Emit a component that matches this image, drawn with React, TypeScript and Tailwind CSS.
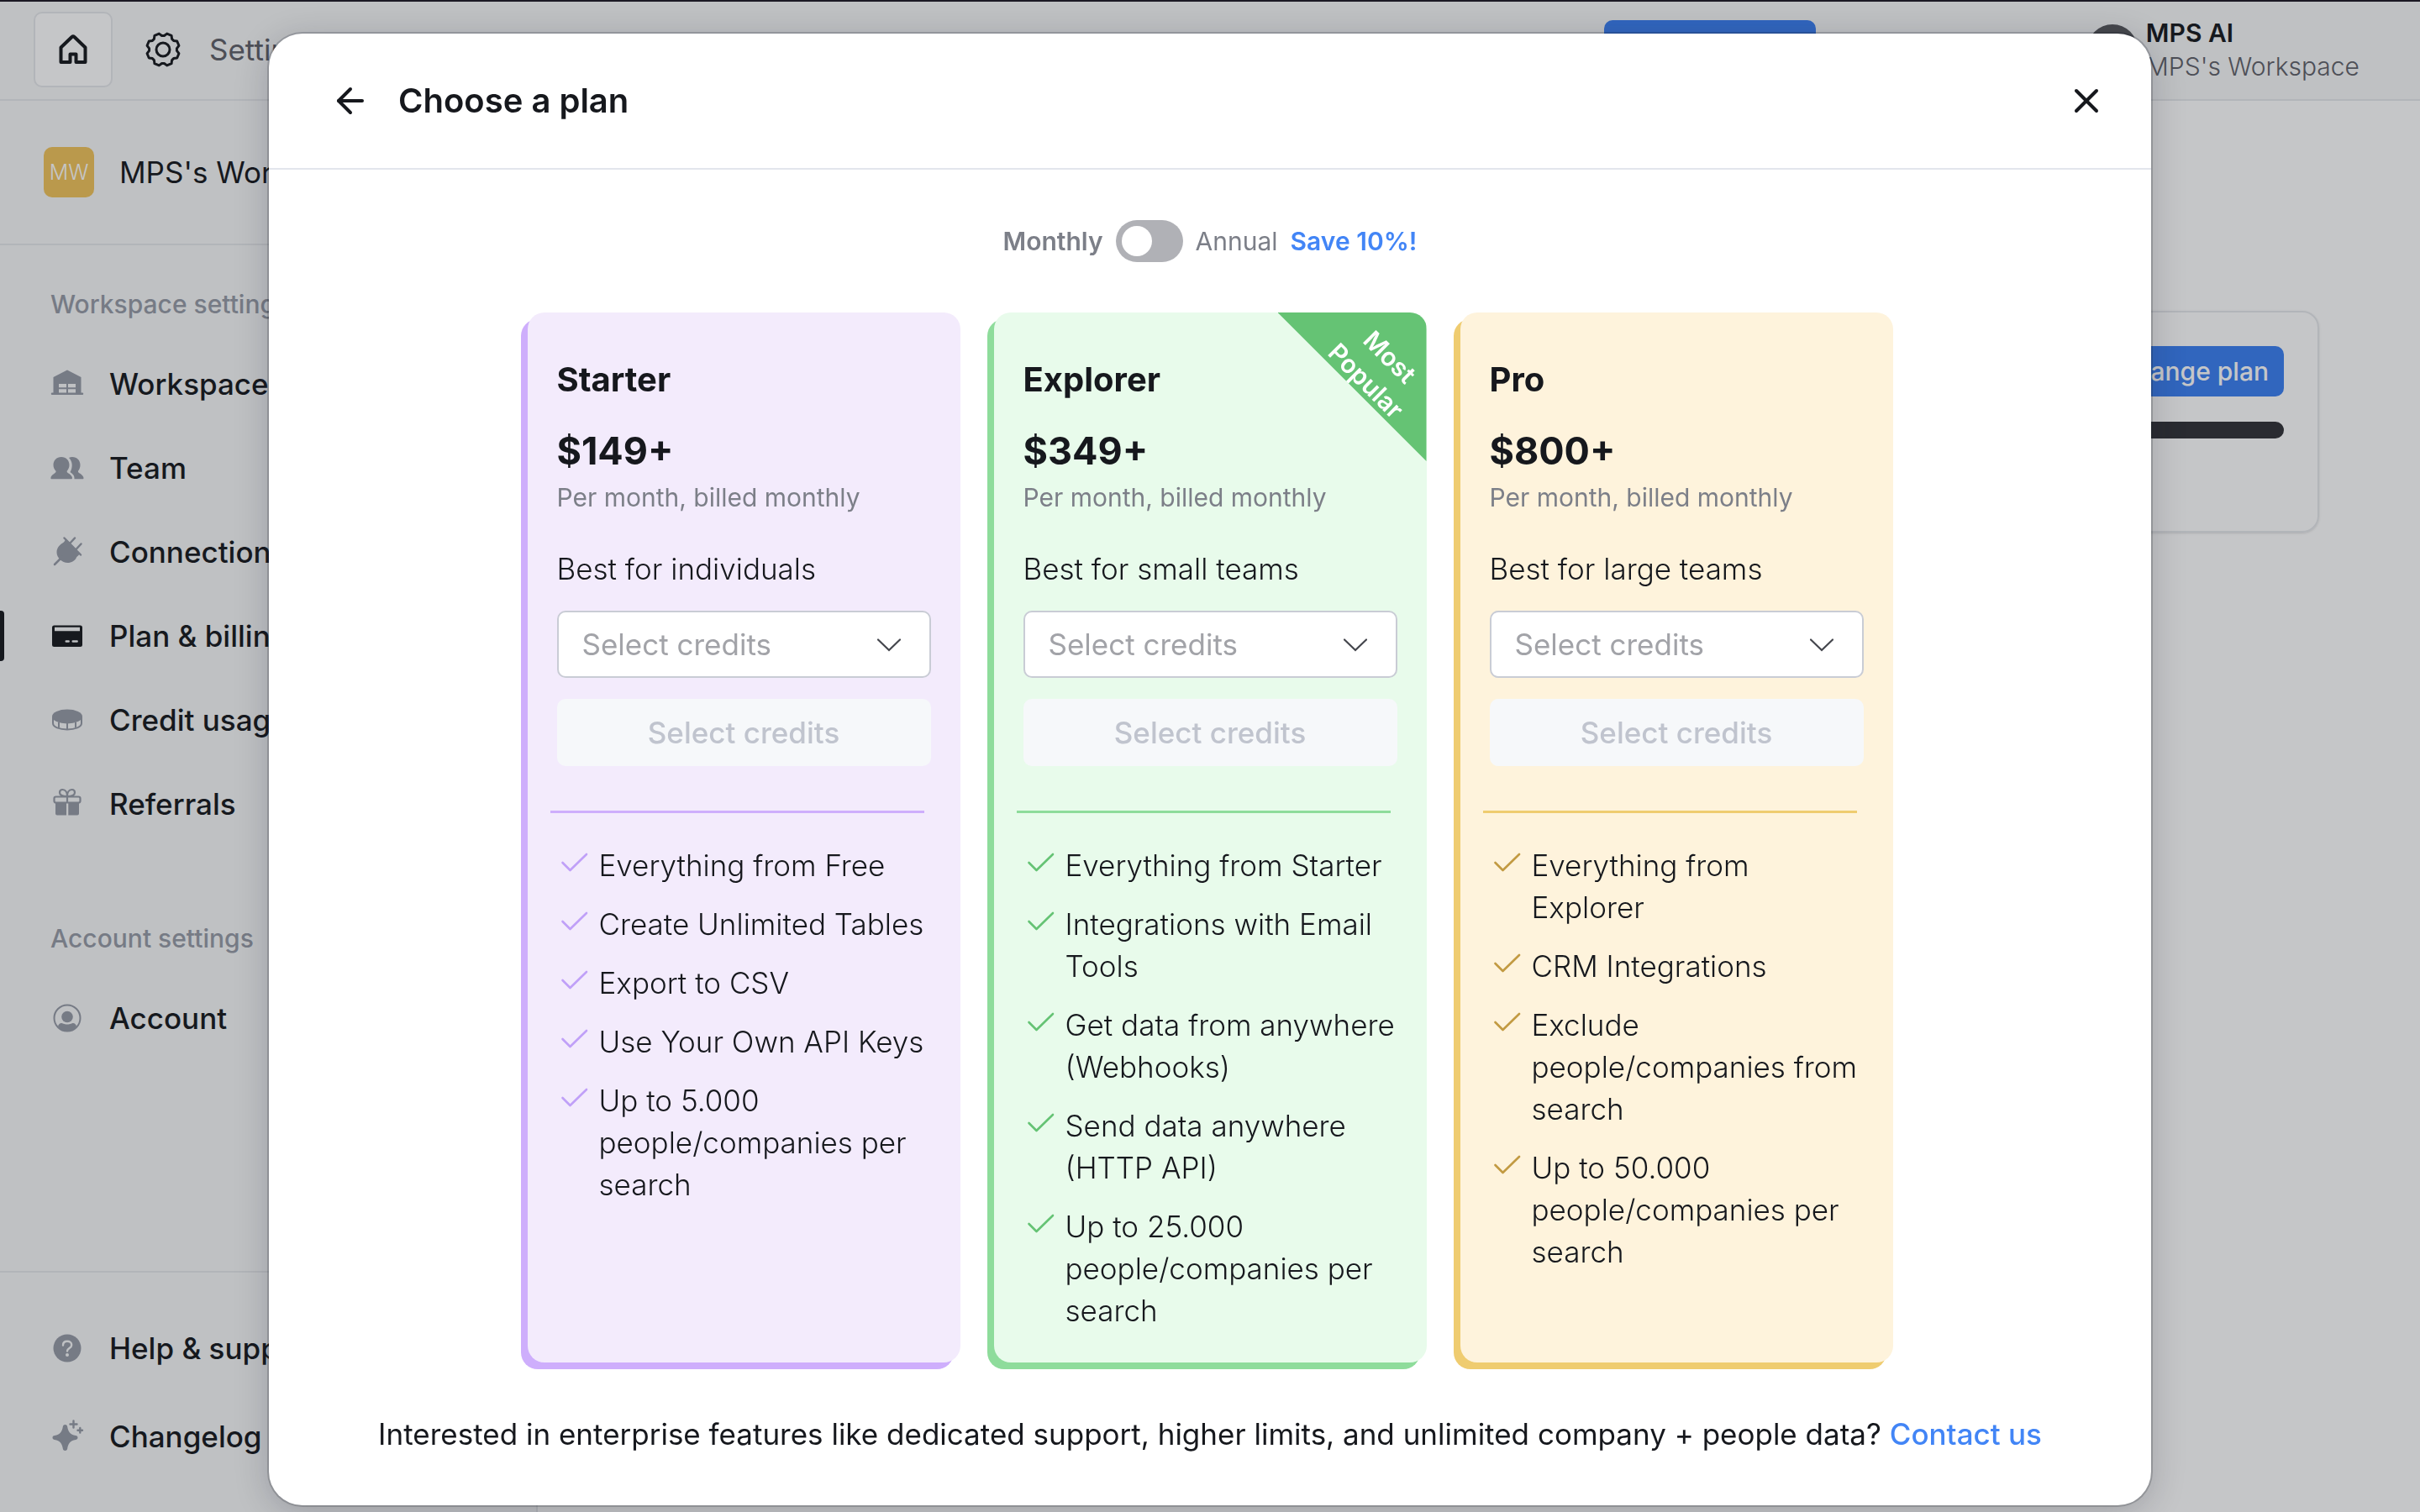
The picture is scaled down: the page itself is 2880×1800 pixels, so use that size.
import { useState } from "react"
import type { ReactNode } from "react"
import { ArrowLeft, Bell, X } from "lucide-react"
import clsx from "clsx"

type Plan = {
  id: string
  name: string
  price: string
  audience: string
  features: string[]
  card: string
  line: string
  check: string
  popular?: boolean
}

const plans: Plan[] = [
  {
    id: "starter",
    name: "Starter",
    price: "$149+",
    audience: "Best for individuals",
    features: [
      "Everything from Free",
      "Create Unlimited Tables",
      "Export to CSV",
      "Use Your Own API Keys",
      "Up to 5.000 people/companies per search",
    ],
    card: "bg-[#f3ebfc] shadow-[-8px_8px_0_#ceaefc]",
    line: "border-[#ceaefc]",
    check: "text-[#c0a0f8]",
  },
  {
    id: "explorer",
    name: "Explorer",
    price: "$349+",
    audience: "Best for small teams",
    features: [
      "Everything from Starter",
      "Integrations with Email Tools",
      "Get data from anywhere (Webhooks)",
      "Send data anywhere (HTTP API)",
      "Up to 25.000 people/companies per search",
    ],
    card: "bg-[#e8fbeb] shadow-[-8px_8px_0_#8edc9b]",
    line: "border-[#8edc9b]",
    check: "text-[#65c374]",
    popular: true,
  },
  {
    id: "pro",
    name: "Pro",
    price: "$800+",
    audience: "Best for large teams",
    features: [
      "Everything from Explorer",
      "CRM Integrations",
      "Exclude people/companies from search",
      "Up to 50.000 people/companies per search",
    ],
    card: "bg-[#fef3dc] shadow-[-8px_8px_0_#efcc70]",
    line: "border-[#efcc70]",
    check: "text-[#c29a42]",
  },
]

function Icon({ children }: { children: ReactNode }) {
  return (
    <svg viewBox="0 0 40 40" className="size-10 shrink-0" fill="currentColor" aria-hidden="true">
      {children}
    </svg>
  )
}

const icons: Record<string, ReactNode> = {
  workspace: (
    <Icon>
      <path
        fillRule="evenodd"
        d="M20 3.5 36.5 12v18.500H38a1 1 0 0 1 0 2.500H2a1 1 0 0 1 0-2.500h1.500V12ZM10 20v4.200h9V20Zm11 0v4.200h9V20ZM10 26.300v4.200h9v-4.200Zm11 0v4.200h9v-4.200Z"
      />
    </Icon>
  ),
  team: (
    <Icon>
      <path d="M13 7c5.500 0 9.500 4 9.500 9.500 0 3-1.200 5.500-2.800 7.300v1.200c1 1.500 5.800 3 6.300 7 0 .8-.5 1.300-1.300 1.300H1.500C.7 33.300.3 32.800.4 32c.6-4 5.100-5.300 6.100-7v-1.200C4.700 22 3.500 19.500 3.500 16.500 3.500 11 7.500 7 13 7Z" />
      <path d="M22 8c1.300-.7 2.600-1 4-1 5.500 0 9.500 4 9.500 9.500 0 3-1 5.500-2.500 7.300V25c1 1.500 6 3 6.500 7 .1.800-.4 1.300-1.200 1.300H28.500c.3-4-1.500-5.800-5-8.300 1.300-2 2.200-5 2.200-8.200 0-3.500-1.400-6.500-3.700-8.800Z" />
    </Icon>
  ),
  connections: (
    <Icon>
      <path d="M18.500 4.500 35 22c-1.500 2.500-3 3-4 4.500-1.500 4-6 6.500-10.500 6.500-6.500 0-13-6-13-12.500 0-4.500 2.500-8.500 7-11 1.500-.8 2.500-2.500 4-5Z" />
      <path
        d="m5 35 9-9M16.500 3.500l19.500 20M23 10l6-6.500M30.500 17l6-6.500"
        stroke="currentColor"
        strokeWidth="2.500"
        strokeLinecap="round"
      />
    </Icon>
  ),
  plan: (
    <Icon>
      <path
        fillRule="evenodd"
        d="M4.500 7.500h31a2.500 2.500 0 0 1 2.500 2.500v20.500a2.500 2.500 0 0 1-2.500 2.500h-31A2.500 2.500 0 0 1 2 30.500V10a2.500 2.500 0 0 1 2.500-2.500ZM5 9.800v4.400h30V9.800Zm13.700 15.500a1.200 1.200 0 0 0 0 2.400h3a1.200 1.200 0 0 0 0-2.400Zm8 0a1.200 1.200 0 0 0 0 2.400h5a1.200 1.200 0 0 0 0-2.400Z"
      />
    </Icon>
  ),
  credits: (
    <Icon>
      <ellipse cx="20" cy="16" rx="18" ry="8.500" />
      <path
        d="M3 16v8c0 4.500 7.500 7.500 17 7.500s17-3 17-7.500v-8M10 22.500v6.500M20 24v7M30 22.500v6.500"
        fill="none"
        stroke="currentColor"
        strokeWidth="2"
      />
    </Icon>
  ),
  referrals: (
    <Icon>
      <path
        d="M20 11c-6 0-9-1.500-9-4.500C11 4.500 12.500 3 14.500 3 18 3 20 6.500 20 11Zm0 0c6 0 9-1.500 9-4.500C29 4.500 27.500 3 25.500 3 22 3 20 6.500 20 11ZM6.500 11.500h27a2 2 0 0 1 2 2v3a2 2 0 0 1-2 2h-27a2 2 0 0 1-2-2v-3a2 2 0 0 1 2-2ZM20 11v8"
        fill="none"
        stroke="currentColor"
        strokeWidth="2.200"
      />
      <path d="M6 19h13v14.500H8a2 2 0 0 1-2-2ZM21.300 19H34v12.500a2 2 0 0 1-2 2H21.300Z" />
    </Icon>
  ),
  account: (
    <Icon>
      <circle cx="20" cy="20" r="15.500" fill="none" stroke="currentColor" strokeWidth="2" />
      <circle cx="20" cy="18.500" r="6.800" />
      <path d="M9 29.500c1-2 2-3.500 4-3.500 1.500 0 3 1.500 7 1.500s5.500-1.500 7-1.500c2 0 3 1.500 4 3.500-2.500 4-6.500 6-11 6s-8.500-2-11-6Z" />
    </Icon>
  ),
  help: (
    <Icon>
      <circle cx="20" cy="20" r="16.500" />
      <path
        d="M15 16.500c0-3 2-4.700 5-4.700s5.200 1.700 5.200 4.400c0 4-5.200 3.600-5.200 7.200"
        fill="none"
        stroke="#f7f8f9"
        strokeWidth="2.400"
        strokeLinecap="round"
      />
      <circle cx="20" cy="28" r="2" fill="#f7f8f9" />
    </Icon>
  ),
  changelog: (
    <Icon>
      <path d="M17.500 6c1.700 0 2.500 1 2.700 2.500.8 5.500 3.300 9.500 9.800 10.500 1.600.3 2.500 1.200 2.500 2.500s-.9 2.200-2.500 2.500c-6.500 1-9 5-9.800 10.500-.2 1.500-1 2.500-2.700 2.500s-2.500-1-2.700-2.500C14 29 11.500 25 5 24c-1.600-.3-2.500-1.200-2.500-2.500S3.400 19.300 5 19c6.500-1 9-5 9.800-10.500C15 7 15.800 6 17.500 6Z" />
      <path
        d="M27.500 1.500v8M23.500 5.500h8M35.300 10v5.500M32.500 12.800H38"
        stroke="currentColor"
        strokeWidth="2.400"
        strokeLinecap="round"
      />
    </Icon>
  ),
}

function HomeIcon() {
  return (
    <svg viewBox="0 0 40 40" className="size-10" fill="none" aria-hidden="true">
      <path
        d="M5.500 35V17.500L18.500 5q1.500-1.300 3 0L34.500 17.500V35H23.500V25.500h-7V35Z"
        stroke="currentColor"
        strokeWidth="4"
        strokeLinejoin="round"
      />
    </svg>
  )
}

// Eight-tooth cog: two outer corners per tooth, one notch between teeth
const cogPoints = Array.from({ length: 8 }, (_, i) => {
  const at = (deg: number, r: number) => {
    const rad = (deg * Math.PI) / 180
    return `${(22 + r * Math.cos(rad)).toFixed(2)},${(22 + r * Math.sin(rad)).toFixed(2)}`
  }
  const base = i * 45
  return `${at(base - 5, 16.5)} ${at(base + 5, 16.5)} ${at(base + 14, 19.5)} ${at(base + 31, 19.5)}`
}).join(" ")

function CogIcon() {
  return (
    <svg viewBox="0 0 44 44" className="size-11" fill="none" stroke="currentColor" aria-hidden="true">
      <polygon points={cogPoints} strokeWidth="3" strokeLinejoin="round" />
      <circle cx="22" cy="22" r="8" strokeWidth="3" />
    </svg>
  )
}

function Header() {
  return (
    <header className="flex h-[120px] items-center border-t-2 border-b-2 border-t-[#1c1824] border-b-[#e6e8eb] bg-[#f7f8f9] pb-[2px] pl-10 pr-18">
      <button
        aria-label="Home"
        className="flex h-[90px] w-[94px] items-center justify-center rounded-[10px] border-2 border-[#e6e8eb] bg-white"
      >
        <HomeIcon />
      </button>
      <div className="ml-[38px] flex items-center gap-[33px]">
        <CogIcon />
        <span className="text-[35px] text-[#5f6168]">Settings</span>
      </div>
      <button aria-label="Upgrade" className="ml-auto h-[70px] w-[252px] rounded-[10px] bg-[#3a7ff2]" />
      <button aria-label="Notifications" className="ml-[25px] text-[#5f6168]">
        <Bell className="size-10" />
      </button>
      <div className="ml-[258px] flex items-center gap-[10px]">
        <span className="size-[60px] rounded-full bg-[#56575b]" />
        <div className="leading-[40px]">
          <div className="text-[30px] font-semibold">MPS AI</div>
          <div className="text-[30px] font-light text-[#5f6168]">MPS's Workspace</div>
        </div>
      </div>
    </header>
  )
}

function NavItem({ icon, label, active }: { icon: string; label: string; active?: boolean }) {
  return (
    <a
      href="#"
      aria-current={active ? "page" : undefined}
      className="relative flex h-[60px] items-center gap-[30px] pl-[60px] text-[35px] font-medium whitespace-nowrap"
    >
      {active && <span className="absolute inset-y-0 left-0 w-[5px] rounded-r bg-[#16181d]" />}
      <span className={active ? "text-[#16181d]" : "text-[#969ba6]"}>{icons[icon]}</span>
      {label}
    </a>
  )
}

function Sidebar() {
  return (
    <aside className="flex w-[640px] shrink-0 flex-col border-r-2 border-[#e6e8eb] bg-[#f7f8f9]">
      <div className="flex h-[172px] items-center gap-[30px] border-b-2 border-[#e6e8eb] pl-[52px]">
        <span className="flex size-[60px] items-center justify-center rounded-[10px] bg-[#f1c35a] pt-[2px] text-[25px] font-light text-white">
          MW
        </span>
        <span className="text-[35px]">MPS's Workspace</span>
      </div>
      <nav className="flex flex-1 flex-col">
        <h2 className="mt-[50px] pl-[60px] text-[30px] leading-[40px] font-medium text-[#969ba6]">
          Workspace settings
        </h2>
        <div className="mt-[45px] flex flex-col gap-10">
          <NavItem icon="workspace" label="Workspace" />
          <NavItem icon="team" label="Team" />
          <NavItem icon="connections" label="Connections" />
          <NavItem icon="plan" label="Plan & billing" active />
          <NavItem icon="credits" label="Credit usage" />
          <NavItem icon="referrals" label="Referrals" />
        </div>
        <h2 className="mt-[110px] pl-[60px] text-[30px] leading-[40px] font-medium text-[#969ba6]">
          Account settings
        </h2>
        <div className="mt-[45px]">
          <NavItem icon="account" label="Account" />
        </div>
      </nav>
      <div className="flex flex-col gap-[45px] border-t-2 border-[#e6e8eb] pt-[60px] pb-[60px]">
        <NavItem icon="help" label="Help & support" />
        <NavItem icon="changelog" label="Changelog" />
      </div>
    </aside>
  )
}

function BillingPage() {
  return (
    <main className="flex-1 bg-white px-[120px] pt-[250px]">
      <section className="flex h-[264px] flex-col items-end gap-[30px] rounded-[20px] border-2 border-[#e6e8eb] p-10 shadow-sm">
        <button className="h-[60px] rounded-[10px] bg-[#3a7ff2] px-[18px] text-[30px] font-medium text-white">
          Change plan
        </button>
        <div className="h-5 w-full rounded-full bg-[#303136]" />
      </section>
    </main>
  )
}

function PlanCard({ plan }: { plan: Plan }) {
  const [credits, setCredits] = useState("")

  return (
    <article className={clsx("relative rounded-[20px] px-[35px] pt-[50px] pb-[37px]", plan.card)}>
      {plan.popular && (
        <div className="absolute top-0 right-0 size-[177px] overflow-hidden rounded-tr-[20px]">
          <div className="absolute inset-0 bg-[#65c374] [clip-path:polygon(0_0,100%_0,100%_100%)]" />
          <div className="absolute top-[27px] left-[44px] w-[150px] rotate-45 text-center text-[30px] leading-[40px] font-semibold text-white">
            Most Popular
          </div>
        </div>
      )}

      <h2 className="text-[40px] leading-[60px] font-bold">{plan.name}</h2>
      <div className="mt-[25px] text-[45px] leading-[60px] font-bold">{plan.price}</div>
      <p className="text-[30px] leading-[50px] text-[#7c7f88]">Per month, billed monthly</p>
      <label htmlFor={plan.id} className="mt-[35px] block text-[35px] leading-[50px] font-light">
        {plan.audience}
      </label>

      <div className="relative mt-[25px]">
        <select
          id={plan.id}
          value={credits}
          onChange={(e) => setCredits(e.target.value)}
          className="block h-20 w-full appearance-none rounded-[10px] border-2 border-[#c9ccd5] bg-white px-7 text-[35px] text-[#a2a3a8]"
        >
          <option value="">Select credits</option>
        </select>
        <svg
          viewBox="0 0 28 16"
          className="pointer-events-none absolute top-[33px] right-9 h-4 w-7"
          fill="none"
          aria-hidden="true"
        >
          <path d="M1 1.500 14 14 27 1.500" stroke="#44464d" strokeWidth="2.200" strokeLinecap="round" />
        </svg>
      </div>
      <button
        disabled
        className="mt-[25px] h-20 w-full rounded-[10px] bg-[#f6f8fa] text-[35px] font-medium text-[#c0c4ce]"
      >
        Select credits
      </button>

      <hr className={clsx("mt-[53px] mr-2 -ml-2 border-t-3", plan.line)} />

      <ul className="mt-[37px] flex flex-col gap-5 text-[35px] leading-[50px] font-light">
        {plan.features.map((feature) => (
          <li key={feature} className="flex">
            <svg
              viewBox="0 0 50 50"
              className={clsx("size-[50px] shrink-0", plan.check)}
              fill="none"
              aria-hidden="true"
            >
              <path
                d="M6.500 22 15.500 31 35 12"
                stroke="currentColor"
                strokeWidth="2.600"
                strokeLinecap="round"
                strokeLinejoin="round"
              />
            </svg>
            <span>{feature}</span>
          </li>
        ))}
      </ul>
    </article>
  )
}

function PlanDialog() {
  const [annual, setAnnual] = useState(false)

  return (
    <div
      role="dialog"
      aria-labelledby="dialog-title"
      className="w-full max-w-[2240px] rounded-[40px] bg-white shadow-[0_0_0_2px_rgba(22,24,36,0.2),0_8px_40px_rgba(22,24,36,0.22)]"
    >
      <div className="flex h-[162px] items-center border-b-2 border-[#e2e5ec] pr-[53px] pl-[73px]">
        <button aria-label="Back">
          <ArrowLeft className="size-12" strokeWidth={2} />
        </button>
        <h1 id="dialog-title" className="ml-[33px] text-[40px] font-semibold">
          Choose a plan
        </h1>
        <button aria-label="Close" className="ml-auto">
          <X className="size-12" strokeWidth={2} />
        </button>
      </div>

      <div className="flex flex-col items-center gap-[60px] px-10 py-[60px]">
        <div className="flex h-[50px] items-center gap-[15px] text-[30px] text-[#7c7f88]">
          <span className="font-semibold">Monthly</span>
          <input
            id="annual"
            type="checkbox"
            role="switch"
            checked={annual}
            onChange={(e) => setAnnual(e.target.checked)}
            className="h-[50px] w-20 appearance-none rounded-full bg-[#b0b1b6] p-[7px] before:block before:size-9 before:rounded-full before:bg-white checked:bg-[#3f83f8] checked:before:ml-[30px]"
          />
          <label htmlFor="annual">Annual</label>
          <span className="font-semibold text-[#4285f6]">Save 10%!</span>
        </div>

        <div className="grid w-full max-w-[1625px] grid-cols-3 gap-10">
          {plans.map((plan) => (
            <PlanCard key={plan.id} plan={plan} />
          ))}
        </div>

        <p className="text-[35px] leading-[50px]">
          Interested in enterprise features like dedicated support, higher limits, and unlimited company + people
          data?{" "}
          <a href="#" className="font-medium text-[#4285f6]">
            Contact us
          </a>
        </p>
      </div>
    </div>
  )
}

export default function App() {
  return (
    <div className="flex h-screen flex-col overflow-hidden font-[Inter,sans-serif] text-[#16181d]">
      <Header />
      <div className="flex flex-1">
        <Sidebar />
        <BillingPage />
      </div>
      <div className="fixed inset-0 flex items-start justify-center bg-[rgba(24,28,36,0.25)] pt-10">
        <PlanDialog />
      </div>
    </div>
  )
}
